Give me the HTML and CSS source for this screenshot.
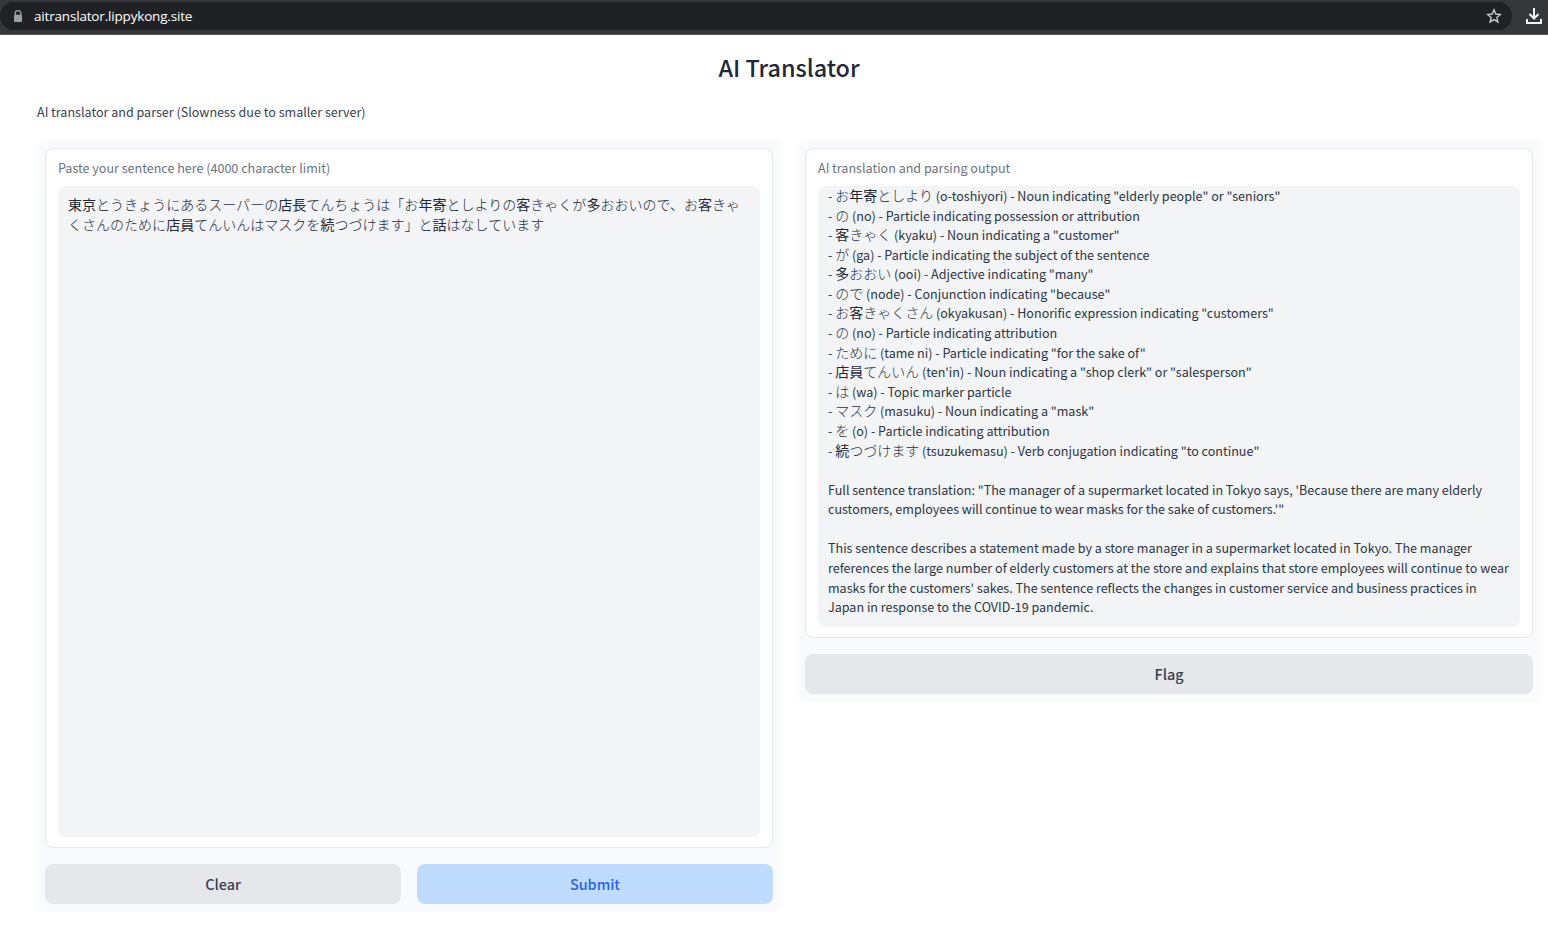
FILE: index.html
```html
<!DOCTYPE html>
<html lang="en">
<head>
<meta charset="utf-8">
<title>AI Translator</title>
<link rel="stylesheet" href="styles.css">
</head>
<body>
<header class="browser-bar">
  <div class="address">
    <svg class="lock" width="10" height="13" viewBox="0 0 10 13"><path d="M2.2 6V3.5a2.8 2.8 0 0 1 5.6 0V6" fill="none" stroke="#9aa0a6" stroke-width="1.3"/><rect x="1" y="4.7" width="8" height="7.3" rx="1" fill="#9aa0a6"/></svg>
    <span class="url">aitranslator.lippykong.site</span>
    <svg class="star" width="16" height="16" viewBox="0 0 16 16"><path d="M8 1.8l1.75 4.25 4.6.4-3.5 3 1.05 4.5L8 11.55l-3.9 2.4 1.05-4.5-3.5-3 4.6-.4z" fill="none" stroke="#c4c7c5" stroke-width="1.4"/></svg>
  </div>
  <svg class="download" width="18" height="18" viewBox="0 0 18 18" fill="none" stroke="#f1f3f4" stroke-width="2"><path d="M9 1v10M4.5 7L9 11.5 13.500 7M2 12v4h14v-4"/></svg>
</header>
<main class="app">
  <h1 class="title">AI Translator</h1>
  <p class="description">AI translator and parser (Slowness due to smaller server)</p>
  <div class="columns">
    <section class="panel">
      <div class="card">
        <div class="label">Paste your sentence here (4000 character limit)</div>
        <div class="field field-input" lang="ja"><b>東京</b>とうきょうにあるスーパーの<b>店長</b>てんちょうは「お<b>年寄</b>としよりの<b>客</b>きゃくが<b>多</b>おおいので、お<b>客</b>きゃ<br>くさんのために<b>店員</b>てんいんはマスクを<b>続</b>つづけます」と<b>話</b>はなしています</div>
      </div>
      <div class="actions">
        <button class="button">Clear</button>
        <button class="button button-primary">Submit</button>
      </div>
    </section>
    <section class="panel">
      <div class="card">
        <div class="label">AI translation and parsing output</div>
        <div class="field field-output">- <span class="ja" lang="ja">お<b>年寄</b>としより</span> (o-toshiyori) - Noun indicating "elderly people" or "seniors"
- <span class="ja" lang="ja">の</span> (no) - Particle indicating possession or attribution
- <span class="ja" lang="ja"><b>客</b>きゃく</span> (kyaku) - Noun indicating a "customer"
- <span class="ja" lang="ja">が</span> (ga) - Particle indicating the subject of the sentence
- <span class="ja" lang="ja"><b>多</b>おおい</span> (ooi) - Adjective indicating "many"
- <span class="ja" lang="ja">ので</span> (node) - Conjunction indicating "because"
- <span class="ja" lang="ja">お<b>客</b>きゃくさん</span> (okyakusan) - Honorific expression indicating "customers"
- <span class="ja" lang="ja">の</span> (no) - Particle indicating attribution
- <span class="ja" lang="ja">ために</span> (tame ni) - Particle indicating "for the sake of"
- <span class="ja" lang="ja"><b>店員</b>てんいん</span> (ten'in) - Noun indicating a "shop clerk" or "salesperson"
- <span class="ja" lang="ja">は</span> (wa) - Topic marker particle
- <span class="ja" lang="ja">マスク</span> (masuku) - Noun indicating a "mask"
- <span class="ja" lang="ja">を</span> (o) - Particle indicating attribution
- <span class="ja" lang="ja"><b>続</b>つづけます</span> (tsuzukemasu) - Verb conjugation indicating "to continue"

Full sentence translation: "The manager of a supermarket located in Tokyo says, 'Because there are many elderly
customers, employees will continue to wear masks for the sake of customers.'"

This sentence describes a statement made by a store manager in a supermarket located in Tokyo. The manager
references the large number of elderly customers at the store and explains that store employees will continue to wear
masks for the customers' sakes. The sentence reflects the changes in customer service and business practices in
Japan in response to the COVID-19 pandemic.</div>
      </div>
      <div class="actions">
        <button class="button">Flag</button>
      </div>
    </section>
  </div>
</main>
</body>
</html>
```
FILE: styles.css
```css
* { box-sizing: border-box; }
body {
  margin: 0;
  height: 936px;
  overflow: hidden;
  background: #fff;
  color: #1f2937;
  font-family: "Noto Sans CJK JP", sans-serif;
  font-size: 12.55px;
}
.browser-bar {
  display: flex;
  align-items: flex-start;
  height: 35px;
  padding-top: 2px;
  background: #35363a;
  border-bottom: 1px solid #5a5a5e;
}
.address {
  display: flex;
  align-items: center;
  width: 1512px;
  height: 28px;
  padding: 0 10px 0 13px;
  border-radius: 14px;
  background: #202124;
}
.url {
  flex: 1;
  margin-left: 11px;
  color: #fff;
  font: 13.5px/28px "Open Sans", sans-serif;
  letter-spacing: -0.18px;
}
.download { margin: 5px 0 0 13px; }
.app { padding: 0 7px 0 37px; }
.title {
  margin: 14px 0 0;
  font-size: 23.4px;
  font-weight: 500;
  line-height: 36px;
  text-align: center;
}
.description { margin: 17px 0 18px; color: #374151; line-height: 20px; }
.columns { display: flex; align-items: flex-start; gap: 16px; }
.panel {
  flex: 1;
  min-width: 0;
  padding: 8px;
  border-radius: 8px;
  background: #f9fafb;
}
.card {
  padding: 9px 12px 10px;
  border: 1px solid #e5e7eb;
  border-radius: 8px;
  background: #fff;
}
.label { height: 20px; margin-bottom: 8px; color: #6b7280; line-height: 20px; }
.field {
  overflow: hidden;
  border-radius: 8px;
  background: #f3f4f6;
  line-height: 19.6px;
  white-space: pre;
}
.field-input { height: 651px; padding: 9px 10px; font-size: 14px; font-weight: 300; letter-spacing: 0.02px; }
.field-output { height: 441px; padding: 0 10px; color: #2b3544; line-height: 19.58px; }
.ja { font-size: 14px; font-weight: 300; line-height: 1; }
.field b { color: #1f2937; font-weight: 400; }
.actions { display: flex; gap: 16px; margin-top: 16px; }
.button {
  flex: 1;
  height: 40px;
  padding: 0;
  border: 0;
  border-radius: 8px;
  background: #e5e7eb;
  color: #374151;
  font: 500 14.4px/40px "Noto Sans CJK JP", sans-serif;
}
.button-primary { background: #bfdbfe; color: #2563eb; }
```
